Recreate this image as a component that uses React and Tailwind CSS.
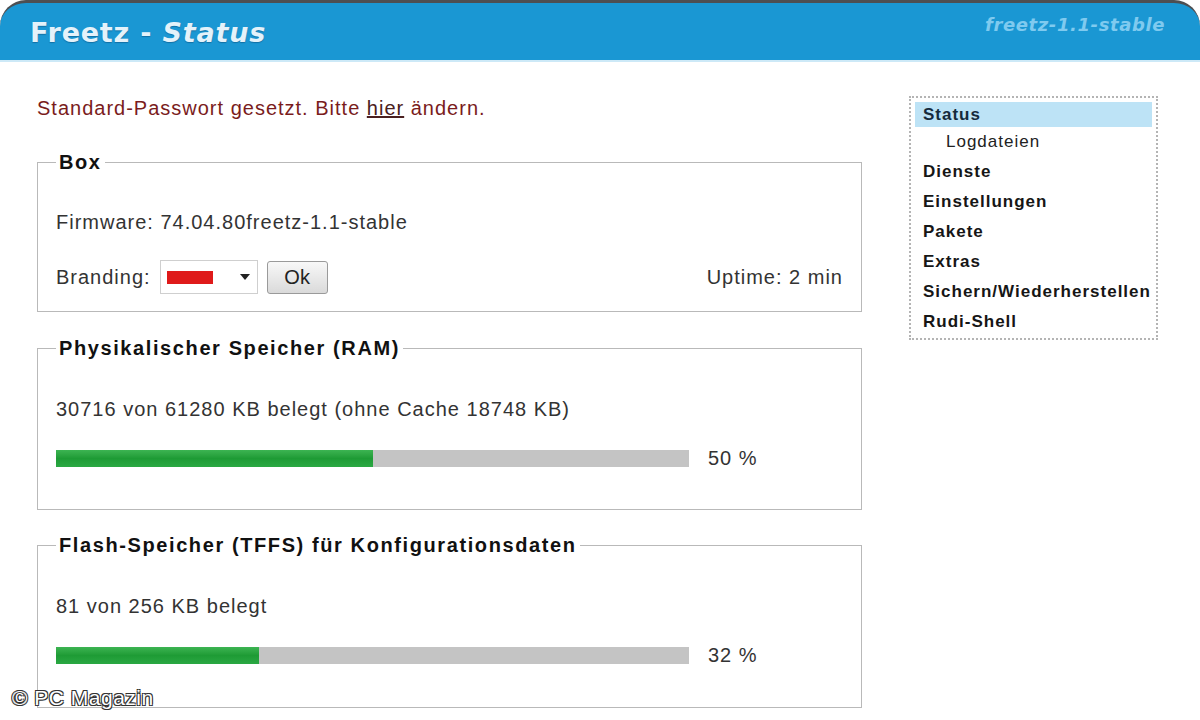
import React from 'react';

const menu = [
    { label: 'Status', active: true },
    { label: 'Logdateien', sub: true },
    { label: 'Dienste' },
    { label: 'Einstellungen' },
    { label: 'Pakete' },
    { label: 'Extras' },
    { label: 'Sichern/Wiederherstellen' },
    { label: 'Rudi-Shell' },
];

function Box({ title, className, children }) {
    return (
        <fieldset className={`border border-[#b9b9b9] px-[18px] ${className}`}>
            <legend className="px-[3px] text-[20px] leading-[24px] font-bold text-[#111] tracking-[1.6px]">
                {title}
            </legend>
            {children}
        </fieldset>
    );
}

function Bar({ percent }) {
    return (
        <div className="flex items-center h-[24px]">
            <div className="w-[633px] h-[17px] bg-[#c4c4c4]">
                <div
                    className="h-full bg-gradient-to-b from-[#3cb452] via-[#1e9b35] to-[#2aa843]"
                    style={{ width: `${percent}%` }}
                />
            </div>
            <span className="ml-[19px]">{percent} %</span>
        </div>
    );
}

export default function App() {
    return (
        <div className="relative w-[1200px] h-[720px] overflow-hidden bg-white font-['Liberation_Sans',Arial,sans-serif] text-[20px] leading-[24px] text-[#333] tracking-[1px]">
            <header className="flex justify-between items-start h-[62px] bg-[#1a97d3] border-t-[3px] border-[#4d4f52] rounded-t-[26px] border-b-2 border-b-[#cde9f7] pl-[30px] pr-[35px] font-['DejaVu_Sans',Verdana,sans-serif] tracking-normal">
                <h1 className="mt-[14px] text-[27px] leading-[32px] font-bold text-[#e4f2fa] tracking-[0.8px] [text-shadow:0_1px_1px_rgba(0,40,80,0.35)]">
                    Freetz - <span className="italic">Status</span>
                </h1>
                <div className="mt-[10px] text-[18px] leading-[24px] font-bold italic text-[#7fcaef] tracking-[0.6px]">
                    freetz-1.1-stable
                </div>
            </header>

            <div className="flex pt-[34px]">
                <main className="ml-[37px] w-[825px]">
                    <p className="text-[#7a1c1c]">
                        Standard-Passwort gesetzt. Bitte <a className="underline text-[#4a2020]">hier</a> ändern.
                    </p>

                    <Box title="Box" className="mt-[30px] pb-[17px]">
                        <div className="mt-[36px]">Firmware: 74.04.80freetz-1.1-stable</div>
                        <div className="mt-[26px] flex items-center h-[34px]">
                            <span>Branding:</span>
                            <div className="ml-[9px] w-[98px] h-[34px] border border-[#cfcfcf] bg-white flex items-center pl-[6px]">
                                <div className="w-[46px] h-[13px] bg-[#df1a1a]" />
                                <svg className="ml-[27px]" width="10" height="6" viewBox="0 0 10 6">
                                    <path d="M0 0h10L5 6z" fill="#222" />
                                </svg>
                            </div>
                            <button className="ml-[9px] w-[61px] h-[33px] rounded-[3px] border border-[#9a9a9a] bg-gradient-to-b from-[#f8f8f8] to-[#dadada] text-[#222] text-[20px] tracking-normal">
                                Ok
                            </button>
                            <span className="ml-auto">Uptime: 2 min</span>
                        </div>
                    </Box>

                    <Box title="Physikalischer Speicher (RAM)" className="mt-[24px] pb-[39px]">
                        <div className="mt-[37px]">30716 von 61280 KB belegt (ohne Cache 18748 KB)</div>
                        <div className="mt-[25px]">
                            <Bar percent={50} />
                        </div>
                    </Box>

                    <Box title="Flash-Speicher (TFFS) für Konfigurationsdaten" className="mt-[23px] pb-[40px]">
                        <div className="mt-[37px]">81 von 256 KB belegt</div>
                        <div className="mt-[25px]">
                            <Bar percent={32} />
                        </div>
                    </Box>
                </main>

                <nav className="ml-[47px] w-[249px] h-[244px] border-2 border-dotted border-[#b4b4b4] px-[4px] pt-[4px] self-start">
                    {menu.map((item) => (
                        <div
                            key={item.label}
                            className={
                                item.active
                                    ? 'h-[25px] flex items-center pl-[8px] bg-[#bde3f6] text-[17px] font-bold text-[#152a3c]'
                                    : item.sub
                                        ? 'h-[30px] flex items-center pl-[31px] text-[17px] text-[#222]'
                                        : 'h-[30px] flex items-center pl-[8px] text-[17px] font-bold text-[#161616]'
                            }
                        >
                            {item.label}
                        </div>
                    ))}
                </nav>
            </div>

            <div className="absolute left-[12px] top-[684px] text-[21px] leading-[28px] text-white tracking-[0.5px] [text-shadow:-1px_-1px_0_#333,1px_-1px_0_#333,-1px_1px_0_#333,1px_1px_0_#333]">
                © PC Magazin
            </div>
        </div>
    );
}
